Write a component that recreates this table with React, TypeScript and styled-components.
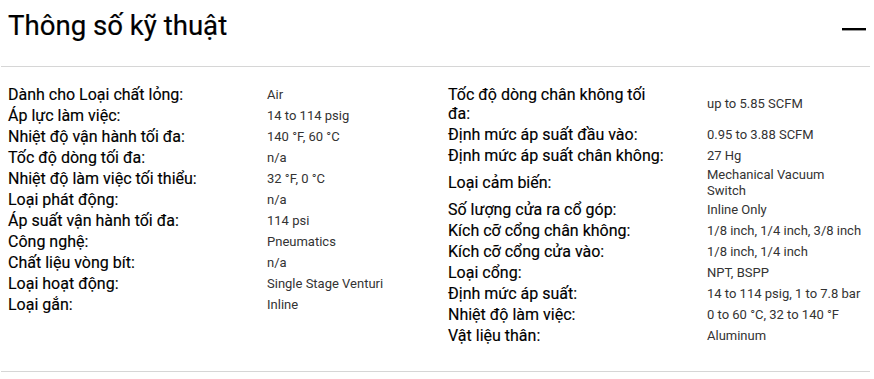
import React from "react";
import styled, { createGlobalStyle } from "styled-components";

const GlobalStyle = createGlobalStyle`
  body {
    margin: 0;
    background: #fff;
    font-family: Roboto, "Liberation Sans", Arial, sans-serif;
  }
`;

const Section = styled.section`
  margin: 0 4px 0 1px;
  border-bottom: 1px solid #d6d6d6;
  padding-bottom: 25px;
`;

const Header = styled.div`
  height: 67px;
  box-sizing: border-box;
  padding: 9px 4px 0 7px;
  display: flex;
  justify-content: space-between;
  align-items: flex-start;
  border-bottom: 1px solid #d6d6d6;
`;

const Title = styled.h2`
  margin: 0;
  font-size: 27.6px;
  font-weight: 400;
  color: #000;
  line-height: 33px;
  -webkit-text-stroke: 0.2px #000;
`;

const ToggleButton = styled.button`
  border: none;
  background: none;
  padding: 0;
  margin-top: 18px;
  width: 24px;
  height: 4px;
  display: flex;
  cursor: pointer;
`;

const Columns = styled.div`
  display: grid;
  grid-template-columns: 440px 1fr;
  padding: 17px 4px 0 7px;
`;

const List = styled.dl`
  margin: 0;
`;

const Row = styled.div`
  display: grid;
  grid-template-columns: 259px 1fr;
  align-items: center;
  padding: 1px 0;
`;

const Label = styled.dt`
  font-size: 16px;
  line-height: 19px;
  color: #000;
  padding-right: 38px;
  -webkit-text-stroke: 0.15px #000;
`;

const Value = styled.dd`
  margin: 0;
  font-size: 13px;
  line-height: 15.7px;
  color: #333;
`;

type Spec = [string, string];

const left: Spec[] = [
  ["Dành cho Loại chất lỏng:", "Air"],
  ["Áp lực làm việc:", "14 to 114 psig"],
  ["Nhiệt độ vận hành tối đa:", "140 °F, 60 °C"],
  ["Tốc độ dòng tối đa:", "n/a"],
  ["Nhiệt độ làm việc tối thiểu:", "32 °F, 0 °C"],
  ["Loại phát động:", "n/a"],
  ["Áp suất vận hành tối đa:", "114 psi"],
  ["Công nghệ:", "Pneumatics"],
  ["Chất liệu vòng bít:", "n/a"],
  ["Loại hoạt động:", "Single Stage Venturi"],
  ["Loại gắn:", "Inline"],
];

const right: Spec[] = [
  ["Tốc độ dòng chân không tối đa:", "up to 5.85 SCFM"],
  ["Định mức áp suất đầu vào:", "0.95 to 3.88 SCFM"],
  ["Định mức áp suất chân không:", "27 Hg"],
  ["Loại cảm biến:", "Mechanical Vacuum Switch"],
  ["Số lượng cửa ra cổ góp:", "Inline Only"],
  ["Kích cỡ cổng chân không:", "1/8 inch, 1/4 inch, 3/8 inch"],
  ["Kích cỡ cổng cửa vào:", "1/8 inch, 1/4 inch"],
  ["Loại cổng:", "NPT, BSPP"],
  ["Định mức áp suất:", "14 to 114 psig, 1 to 7.8 bar"],
  ["Nhiệt độ làm việc:", "0 to 60 °C, 32 to 140 °F"],
  ["Vật liệu thân:", "Aluminum"],
];

const SpecList = ({ items }: { items: Spec[] }) => (
  <List>
    {items.map(([label, value]) => (
      <Row key={label}>
        <Label>{label}</Label>
        <Value>{value}</Value>
      </Row>
    ))}
  </List>
);

export default function App() {
  return (
    <>
      <GlobalStyle />
      <Section>
        <Header>
          <Title>Thông số kỹ thuật</Title>
          <ToggleButton aria-label="Thu gọn">
            <svg width="24" height="4" viewBox="0 0 24 4">
              <rect x="0" y="1" width="24" height="2.4" fill="#000" />
            </svg>
          </ToggleButton>
        </Header>
        <Columns>
          <SpecList items={left} />
          <SpecList items={right} />
        </Columns>
      </Section>
    </>
  );
}
